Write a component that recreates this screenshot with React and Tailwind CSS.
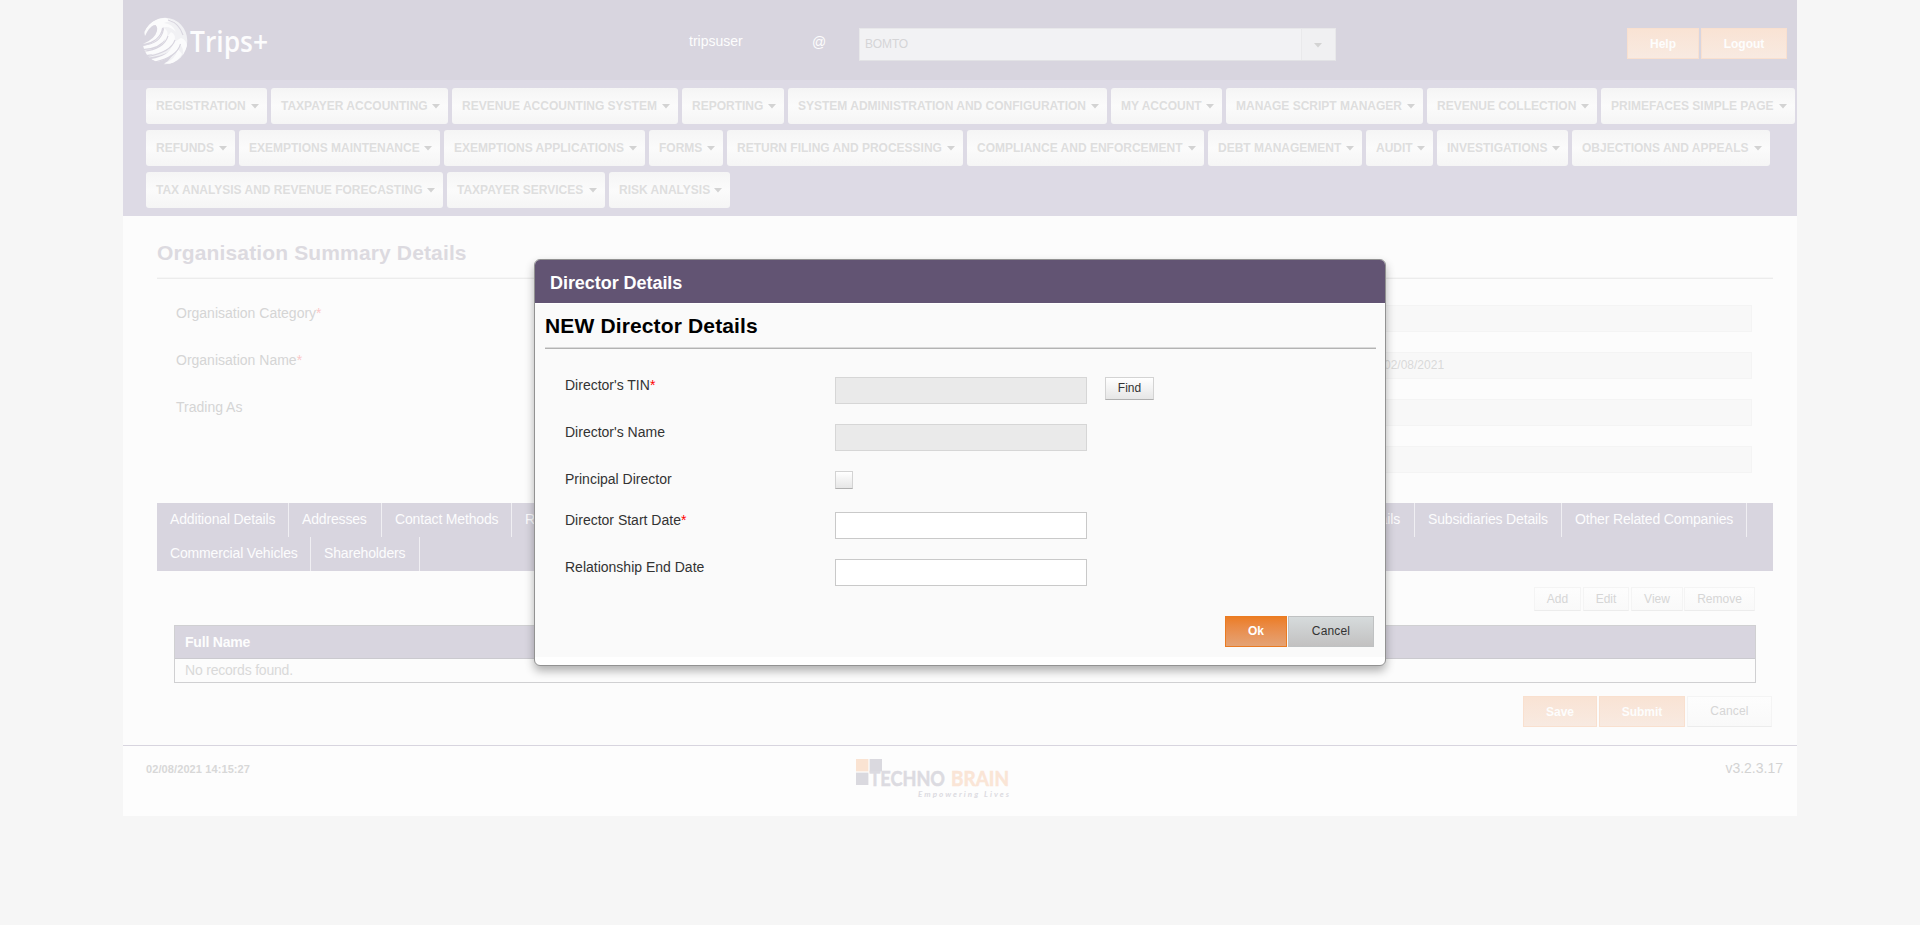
const NAV = [
  [
    ["REGISTRATION", "w-[121px]"],
    ["TAXPAYER ACCOUNTING", "w-[177px]"],
    ["REVENUE ACCOUNTING SYSTEM", "w-[226px]"],
    ["REPORTING", "w-[102px]"],
    ["SYSTEM ADMINISTRATION AND CONFIGURATION", "w-[319px]"],
    ["MY ACCOUNT", "w-[111px]"],
    ["MANAGE SCRIPT MANAGER", "w-[197px]"],
    ["REVENUE COLLECTION", "w-[170px]"],
    ["PRIMEFACES SIMPLE PAGE", "w-[194px]"],
  ],
  [
    ["REFUNDS", "w-[89px]"],
    ["EXEMPTIONS MAINTENANCE", "w-[201px]"],
    ["EXEMPTIONS APPLICATIONS", "w-[201px]"],
    ["FORMS", "w-[74px]"],
    ["RETURN FILING AND PROCESSING", "w-[236px]"],
    ["COMPLIANCE AND ENFORCEMENT", "w-[237px]"],
    ["DEBT MANAGEMENT", "w-[154px]"],
    ["AUDIT", "w-[67px]"],
    ["INVESTIGATIONS", "w-[131px]"],
    ["OBJECTIONS AND APPEALS", "w-[198px]"],
  ],
  [
    ["TAX ANALYSIS AND REVENUE FORECASTING", "w-[297px]"],
    ["TAXPAYER SERVICES", "w-[158px]"],
    ["RISK ANALYSIS", "w-[121px]"],
  ],
];

function Caret() {
  return (
    <svg width="8" height="5" viewBox="0 0 8 5" className="shrink-0">
      <path d="M0 0h8L4 4.6z" fill="#d3d3d3" />
    </svg>
  );
}

function Globe() {
  return (
    <svg width="140" height="52" viewBox="0 0 140 52">
      <defs>
        <clipPath id="ball">
          <ellipse cx="24" cy="25" rx="22.3" ry="23.2" />
        </clipPath>
      </defs>
      <g clipPath="url(#ball)">
        <path d="M14 0Q34 -2 47 12V50H20Q34 42 34 30Q28 40 2 42Q22 36 24 22Q26 10 14 0z" fill="#f1f1f4" />
        <g fill="#fbfbfc">
          <path d="M3 15Q11 1 25 2L36 7Q28 4 23 7Q32 8 35 16Q28 9 21 12Q19 25 2 28Q14 23 16 15Q17 9 13 9Q8 11 4 20z" />
          <path d="M23 12Q28 15 26 21L30 16Q36 19 33 26L40 22Q46 24 46 31L42 39Q43 32 39 29Q34 41 16 46L10 43Q28 40 31 30Q24 37 5 39L3 34Q20 34 25 22Q19 32 2 33V30Q19 26 23 12z" />
          <path d="M37 33Q34 44 24 47L30 48Q38 44 41 38z" />
        </g>
        <g fill="none" stroke="#d8d5df" strokeWidth="1.1">
          <path d="M1 29.5Q20 28 22.500 13" />
          <path d="M2 35.500Q23 33 27 20" />
          <path d="M7 40.500Q30 36 34 24" />
          <path d="M14 46Q36 41 39.500 28" />
          <path d="M5 21Q9 12 15 9.500" />
          <path d="M8 23Q11 16 15 13" />
          <path d="M27 4Q38 7 42 19" />
        </g>
      </g>
      <text x="49" y="36" textLength="78" lengthAdjust="spacingAndGlyphs" className="font-['Open_Sans',sans-serif] text-[28px] font-semibold" fill="#fcfcfd">
        Trips+
      </text>
    </svg>
  );
}

function TechnoBrain() {
  return (
    <svg width="164" height="44" viewBox="0 0 164 44">
      <rect x="0" y="0" width="12.4" height="12.4" fill="#fae3d2" />
      <rect x="13.6" y="0" width="12.4" height="12.4" fill="#dad9df" />
      <rect x="0" y="13.6" width="12.4" height="12.4" fill="#dad9df" />
      <g className="font-[Lato,sans-serif] text-[20px] font-bold" strokeWidth="0.5">
        <text x="13.5" y="27.3" textLength="75.500" lengthAdjust="spacingAndGlyphs" fill="#dcdbe1" stroke="#dcdbe1">TECHNO</text>
        <text x="95" y="27.3" textLength="58" lengthAdjust="spacingAndGlyphs" fill="#fae5d6" stroke="#fae5d6">BRAIN</text>
      </g>
      <text x="62" y="38" textLength="91" className="font-[Lato,sans-serif] text-[8px] font-bold italic" fill="#dcdbe1">
        Empowering Lives
      </text>
    </svg>
  );
}

function FadedField({ label, required, value }) {
  return (
    <div className="flex h-[47px] items-start justify-between pr-[21px] pl-[19px]">
      <span className="text-[14px] leading-5 text-[#d5d5d5]">
        {label}
        {required && <span className="text-[#fbc8c8]">*</span>}
      </span>
      <span className="mt-[2px] h-[27px] w-[374px] border border-[#f4f4f4] bg-[#f8f8f8] pl-[5px] text-[12px] leading-[25px] text-[#dadada]">
        {value}
      </span>
    </div>
  );
}

function Tab({ children, className }) {
  return (
    <div className={"h-[34px] border-r border-[#f0eff3] pl-[13px] text-[14px] leading-[33px] tracking-[-0.16px] whitespace-nowrap text-[#fcfcfd] " + className}>
      {children}
    </div>
  );
}

function SmallButton({ children, className }) {
  return (
    <button className={"h-6 border border-[#f4f4f4] border-b-[#ececec] bg-gradient-to-b from-[#fdfdfd] to-[#f9f9f9] text-[12px] leading-[22px] text-[#d6d6d6] " + className}>
      {children}
    </button>
  );
}

function OrangeFaded({ children, className }) {
  return (
    <button className={"h-[31px] border border-[#f9e0cf] bg-gradient-to-b from-[#f9e3d4] to-[#f8eae1] pt-px text-[12px] leading-[28px] font-bold text-[#fdfdfd] " + className}>
      {children}
    </button>
  );
}

function DialogRow({ label, required, className, children }) {
  return (
    <div className={"flex items-start pl-[20px] " + className}>
      <span className="w-[270px] text-[14px] leading-5 text-[#333]">
        {label}
        {required && <span className="text-[#f00]">*</span>}
      </span>
      {children}
    </div>
  );
}

function Dialog() {
  return (
    <div className="absolute top-[259px] left-[534px] flex h-[407px] w-[852px] flex-col overflow-hidden rounded-[6px] border border-[#929292] bg-white shadow-[0_5px_10px_rgba(0,0,0,0.3)]">
      <div className="h-[43px] shrink-0 bg-[#625473] pl-[15px] text-[18px] leading-[46px] font-bold tracking-[-0.05px] text-white">
        Director Details
      </div>
      <div className="mt-px flex h-[353px] flex-col bg-[#fafafa] px-[9px] pl-[10px]">
        <h2 className="mt-[10px] h-6 text-[21px] leading-6 font-bold tracking-[0.14px] text-black">NEW Director Details</h2>
        <div className="mt-[9px] h-[2px] border-b border-[#b3b3b3] bg-[#dadada]" />
        <div className="mt-[26px] flex flex-col">
          <DialogRow label="Director's TIN" required className="h-[47px]">
            <div className="mt-[2px] h-[27px] w-[252px] border border-[#d6d6d6] bg-[#eaeaea]" />
            <button className="mt-[2px] ml-[18px] h-[23px] w-[49px] border border-[#d3d3d3] border-b-[#b0b0b0] bg-gradient-to-b from-white to-[#e6e6e6] text-[12px] leading-[21px] text-[#333]">
              Find
            </button>
          </DialogRow>
          <DialogRow label="Director's Name" className="h-[47px]">
            <div className="mt-[2px] h-[27px] w-[252px] border border-[#d6d6d6] bg-[#eaeaea]" />
          </DialogRow>
          <DialogRow label="Principal Director" className="h-[41px]">
            <div className="mt-[2px] h-[18px] w-[18px] border border-[#d3d3d3] border-b-[#b0b0b0] bg-gradient-to-b from-white to-[#e6e6e6]" />
          </DialogRow>
          <DialogRow label="Director Start Date" required className="h-[47px]">
            <div className="mt-[2px] h-[27px] w-[252px] border border-[#c9c9c9] bg-white" />
          </DialogRow>
          <DialogRow label="Relationship End Date" className="h-[59px]">
            <div className="mt-[2px] h-[27px] w-[252px] border border-[#c9c9c9] bg-white" />
          </DialogRow>
        </div>
        <div className="flex justify-end gap-px pr-[2px]">
          <button className="h-[31px] w-[62px] border border-[#ea7b22] bg-gradient-to-b from-[#ec7d22] to-[#e4a375] text-[12px] leading-[29px] font-bold text-white">
            Ok
          </button>
          <button className="h-[31px] w-[86px] border border-[#bfc1c2] bg-gradient-to-b from-[#d6dbdc] to-[#c2c1c1] text-[12px] leading-[29px] tracking-[0.15px] text-[#333]">
            Cancel
          </button>
        </div>
      </div>
    </div>
  );
}

export default function App() {
  return (
    <div className="relative h-[925px] w-[1920px] overflow-hidden bg-[#f6f6f6] font-['Liberation_Sans',Arial,sans-serif]">
      <div className="ml-[123px] flex h-[816px] w-[1674px] flex-col bg-[#fcfcfc]">
        <header className="flex h-20 shrink-0 items-start bg-[#d8d5df] text-[14px] text-[#fdfdfd]">
          <div className="mt-4 ml-[18px] w-[548px]">
            <Globe />
          </div>
          <span className="mt-[31px] w-[123px] leading-5">tripsuser</span>
          <span className="mt-[32px] w-[47px] leading-5">@</span>
          <div className="mt-7 flex h-[33px] w-[477px] border border-[#e8e8ea] border-b-[#e2e2e5] bg-[#f2f2f4]">
            <span className="flex-1 pl-[5px] text-[12px] leading-[31px] tracking-[-0.15px] text-[#d5d5d7]">BOMTO</span>
            <span className="flex w-[34px] items-center justify-center border-l border-[#e9e9eb] bg-[#f0f0f2] pt-[2px] pr-px">
              <Caret />
            </span>
          </div>
          <div className="mt-7 ml-[291px] flex gap-[2px]">
            <OrangeFaded className="w-[72px]">Help</OrangeFaded>
            <OrangeFaded className="w-[86px]">Logout</OrangeFaded>
          </div>
        </header>

        <nav className="flex h-[136px] shrink-0 flex-col gap-[6px] bg-[#dddae5] pt-2 pl-[23px]">
          {NAV.map((row, i) => (
            <div key={i} className="flex gap-1">
              {row.map(([label, width]) => (
                <div
                  key={label}
                  className={
                    "flex h-9 shrink-0 items-center justify-between rounded-[3px] bg-gradient-to-b from-[#f5f5f5] via-[#fbfbfb] to-[#f5f5f5] pr-[8px] pl-[10px] text-[12px] font-bold whitespace-nowrap text-[#dedede] " +
                    width
                  }
                >
                  {label}
                  <Caret />
                </div>
              ))}
            </div>
          ))}
        </nav>

        <main className="flex flex-col px-[24px] pt-[25px] pl-[34px]">
          <h1 className="h-6 text-[21px] leading-6 font-bold tracking-[0.14px] text-[#dcdae0]">Organisation Summary Details</h1>
          <div className="mt-3 h-[2px] border-b border-[#ececec] bg-[#f6f6f6]" />
          <div className="mt-6 flex flex-col">
            <FadedField label="Organisation Category" required />
            <FadedField label="Organisation Name" required value="02/08/2021" />
            <FadedField label="Trading As" />
            <FadedField />
          </div>

          <div className="mt-3 flex h-[68px] flex-col bg-[#d8d5df]">
            <div className="flex">
              <Tab className="w-[132px]">Additional Details</Tab>
              <Tab className="w-[93px]">Addresses</Tab>
              <Tab className="w-[130px]">Contact Methods</Tab>
              <Tab className="w-[452px]">R</Tab>
              <Tab className="w-[451px] pr-[14px] text-right">Details</Tab>
              <Tab className="w-[147px]">Subsidiaries Details</Tab>
              <Tab className="w-[185px]">Other Related Companies</Tab>
            </div>
            <div className="flex">
              <Tab className="w-[154px]">Commercial Vehicles</Tab>
              <Tab className="w-[109px]">Shareholders</Tab>
            </div>
          </div>

          <div className="mt-4 flex justify-end gap-[2px] pr-[18px]">
            <SmallButton className="w-[47px]">Add</SmallButton>
            <SmallButton className="w-[46px]">Edit</SmallButton>
            <SmallButton className="w-[52px]">View</SmallButton>
            <SmallButton className="-ml-px w-[71px]">Remove</SmallButton>
          </div>

          <div className="mt-[14px] mr-[17px] ml-[17px] border border-[#d0d0d2]">
            <div className="h-[33px] border-b border-[#cbcacf] bg-[#d8d5df] pl-[10px] text-[14px] leading-[33px] font-bold tracking-[-0.2px] text-[#fdfdfd]">
              Full Name
            </div>
            <div className="h-[23px] pl-[10px] text-[14px] leading-[23px] tracking-[-0.2px] text-[#d9d9d9]">No records found.</div>
          </div>

          <div className="mt-[13px] flex justify-end gap-[2px] pr-px">
            <OrangeFaded className="w-[74px]">Save</OrangeFaded>
            <OrangeFaded className="w-[86px]">Submit</OrangeFaded>
            <button className="h-[31px] w-[85px] border border-[#f4f4f4] border-b-[#ececec] bg-gradient-to-b from-[#fdfdfd] to-[#f9f9f9] text-[12px] leading-[29px] tracking-[0.15px] text-[#d6d6d6]">
              Cancel
            </button>
          </div>
        </main>

        <footer className="mt-[18px] flex flex-1 items-start border-t border-[#d8d5df] bg-[#fdfdfd]">
          <span className="mt-[15px] w-[710px] pl-[23px] text-[11px] leading-4 font-bold tracking-[0.1px] text-[#d8d8d8]">02/08/2021 14:15:27</span>
          <div className="mt-[13px] ml-[23px]">
            <TechnoBrain />
          </div>
          <span className="mt-[12px] mr-[14px] ml-auto text-[14px] leading-5 text-[#d3d3d3]">v3.2.3.17</span>
        </footer>
      </div>
      <Dialog />
    </div>
  );
}
